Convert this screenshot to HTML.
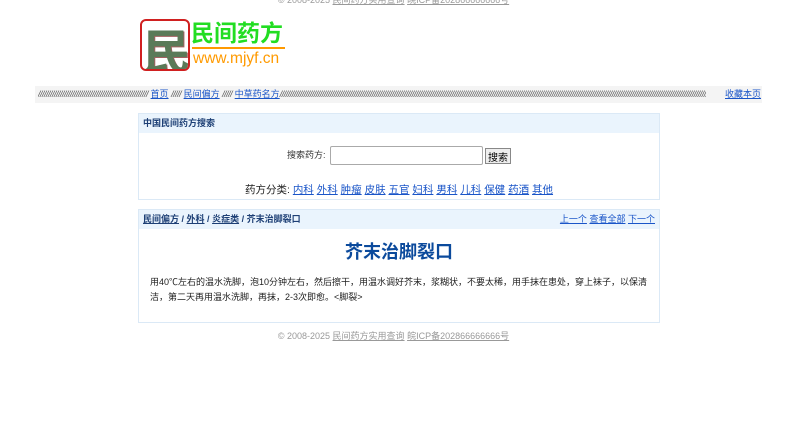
<!DOCTYPE html>
<html><head><meta charset="utf-8">
<style>
*{margin:0;padding:0;box-sizing:border-box}
body{width:787px;height:431px;background:#fff;font-family:"Liberation Sans","Noto Sans CJK SC",sans-serif;font-size:9px;color:#333;position:relative;overflow:hidden}
a{color:#1a55c8;text-decoration:underline}
.topline{position:absolute;top:-7px;left:0;width:787px;text-align:center;color:#999;font-size:9px}
.logo{position:absolute;left:140px;top:19px;width:50px;height:52px;border:2px solid #d02020;border-radius:6px;background:#fff;overflow:hidden}
.logo span{position:absolute;left:1px;top:-8px;font-size:48px;font-weight:bold;color:#5a7a58;font-family:"Noto Sans CJK SC",sans-serif;text-shadow:1px 1px 0 #a46060}
.lt{position:absolute;left:191px;top:15px;font-size:23px;font-weight:bold;color:#22dd22;font-family:"Noto Sans CJK SC",sans-serif;line-height:32px}
.ll{position:absolute;left:192px;top:47px;width:93px;height:2px;background:#ff9900}
.lu{position:absolute;left:193px;top:50px;font-size:15.5px;color:#ff9a00;line-height:18px}
.nav{position:absolute;left:35px;top:86px;width:727px;height:17px;background:#f4f4f4;font-size:9px;line-height:17px;color:#555;white-space:nowrap;overflow:hidden}
.nav .l{position:absolute;left:3px;width:668px;overflow:hidden}
.nav i{font-style:italic;letter-spacing:-0.5px}
.nav .r{position:absolute;left:690px}
.box{position:absolute;left:138px;width:522px;border:1px solid #dbe9f6;background:#fff}
.hd{background:#eaf4fd;height:19px;line-height:19px;padding-left:4px;font-weight:bold;color:#1d3f75;font-size:9px}
.s1{top:113px;height:87px}
.s2{top:209px;height:114px}
.srch{position:absolute;top:32px;left:0;width:100%;text-align:center;font-size:9px;color:#333}
.srch input{width:153px;height:19px;border:1px solid #aaa;border-radius:2px;vertical-align:middle;margin:0 2px}
.srch button{height:16px;font-size:10px;padding:0 2px;border:1px solid #888;background:#eee;vertical-align:middle;font-family:inherit}
.cat{position:absolute;top:68px;width:100%;text-align:center;font-size:10.5px;color:#222}
.hd2{display:flex;justify-content:space-between;padding-right:4px}
.hd2 a{color:#1d3f75}
.hd2 .rt a{color:#1a55c8;font-weight:normal}
h1{text-align:center;font-size:18px;color:#0b4a9c;margin-top:12px;line-height:22px}
.txt{padding:12px 11px 0 11px;font-size:9px;line-height:15px;color:#222}
.foot{position:absolute;top:329px;width:787px;text-align:center;color:#999;font-size:9px}
.foot a{color:#999}
</style></head><body>
<div class="topline">© 2008-2025 <u>民间药方实用查询</u> <u>皖ICP备202866666666号</u></div>
<div class="logo"><span>民</span></div>
<div class="lt">民间药方</div>
<div class="ll"></div>
<div class="lu">www.mjyf.cn</div>
<div class="nav"><span class="l"><i>///////////////////////////////////////////////////////</i> <a href="#">首页</a> <i>/////</i> <a href="#">民间偏方</a> <i>/////</i> <a href="#">中草药名方</a><i>//////////////////////////////////////////////////////////////////////////////////////////////////////////////////////////////////////////////////////////////////////////////////////////////////////////////////////////////////</i></span><span class="r"><a href="#">收藏本页</a></span></div>
<div class="box s1"><div class="hd">中国民间药方搜索</div>
<div class="srch">搜索药方: <input type="text"><button>搜索</button></div>
<div class="cat">药方分类: <a href="#">内科</a> <a href="#">外科</a> <a href="#">肿瘤</a> <a href="#">皮肤</a> <a href="#">五官</a> <a href="#">妇科</a> <a href="#">男科</a> <a href="#">儿科</a> <a href="#">保健</a> <a href="#">药酒</a> <a href="#">其他</a></div>
</div>
<div class="box s2"><div class="hd hd2"><span><a href="#">民间偏方</a> / <a href="#">外科</a> / <a href="#">炎症类</a> / 芥末治脚裂口</span><span class="rt"><a href="#">上一个</a> <a href="#">查看全部</a> <a href="#">下一个</a></span></div>
<h1>芥末治脚裂口</h1>
<div class="txt">用40℃左右的温水洗脚，泡10分钟左右，然后擦干，用温水调好芥末，浆糊状，不要太稀，用手抹在患处，穿上袜子，以保清洁，第二天再用温水洗脚，再抹，2-3次即愈。&lt;脚裂&gt;</div>
</div>
<div class="foot">© 2008-2025 <a href="#">民间药方实用查询</a> <a href="#">皖ICP备202866666666号</a></div>
</body></html>
